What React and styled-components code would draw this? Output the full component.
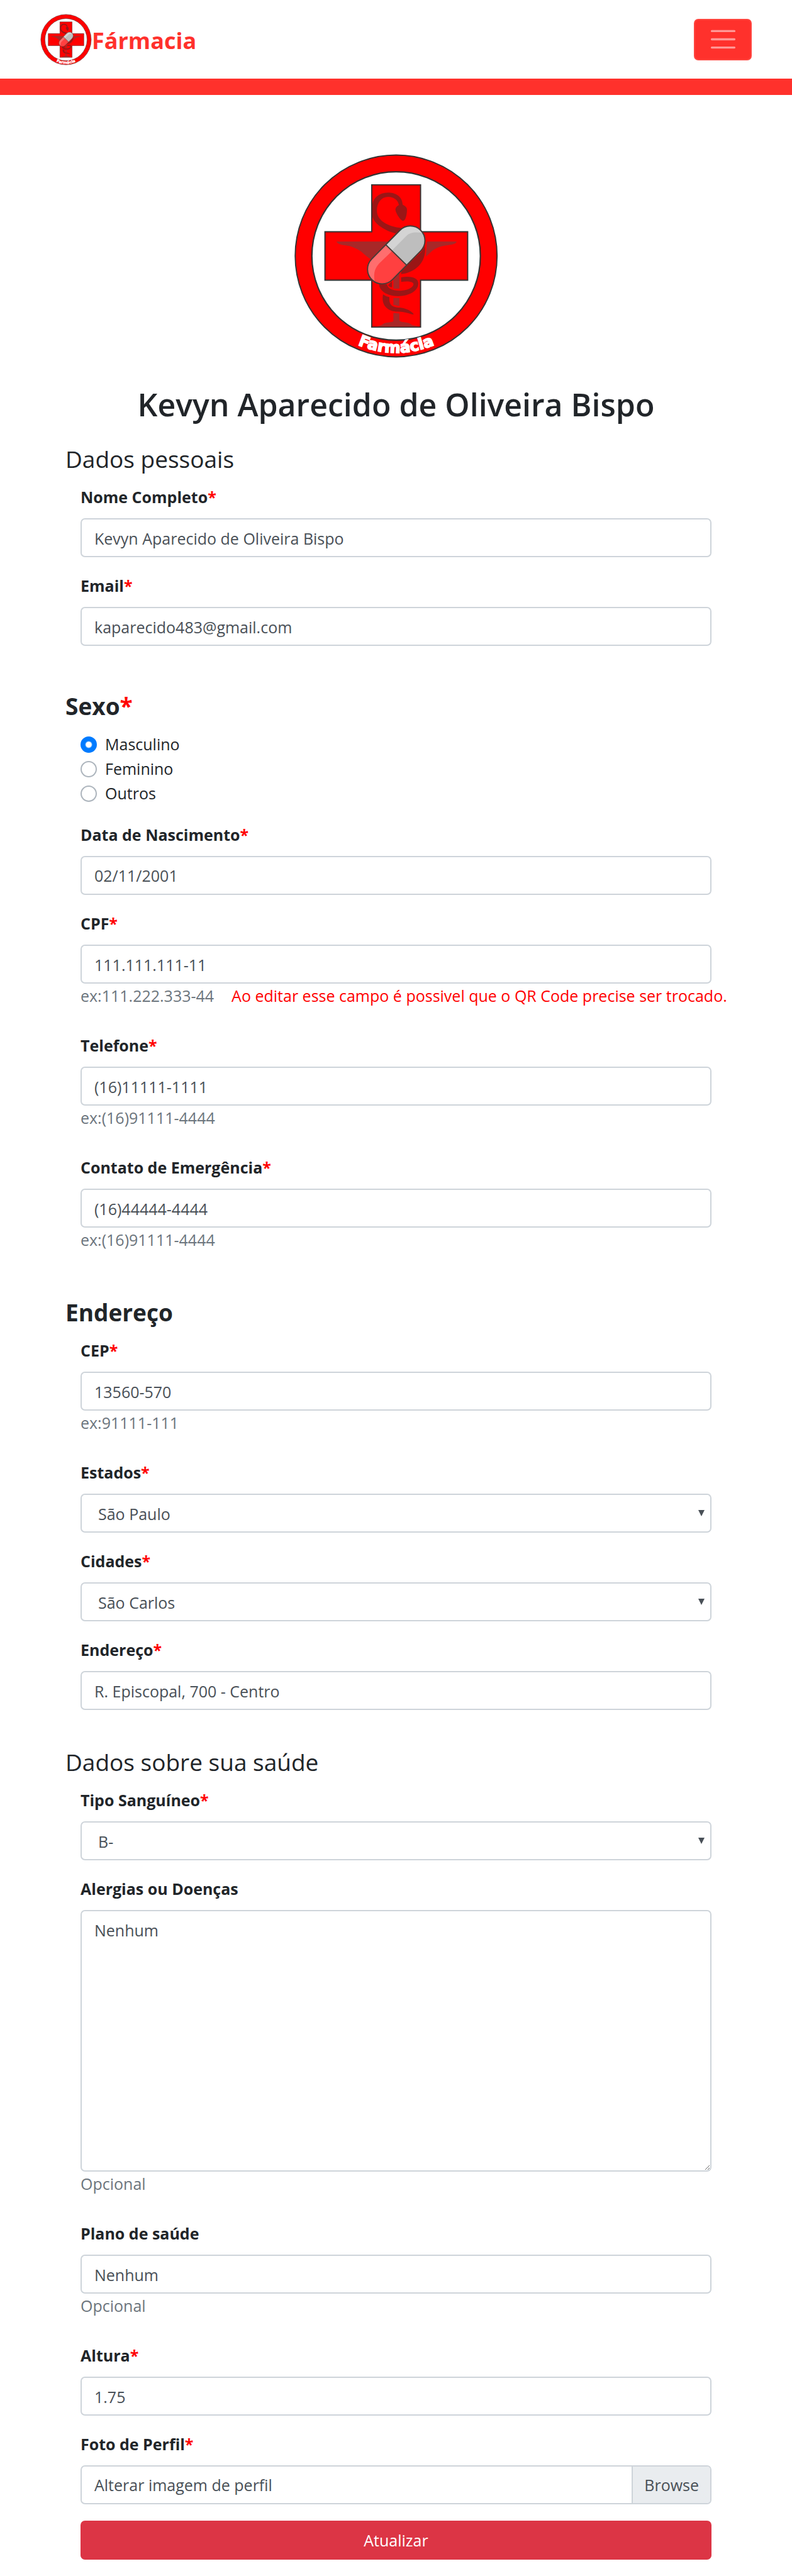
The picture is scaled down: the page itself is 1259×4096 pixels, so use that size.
import React, { useId, useState } from "react";
import styled, { createGlobalStyle } from "styled-components";

const color = {
  brand: "#ff312c",
  text: "#212529",
  field: "#495057",
  border: "#ced4da",
  muted: "#6c757d",
  required: "#ff0000",
};

const GlobalStyle = createGlobalStyle`
  *, *::before, *::after { box-sizing: border-box; }
  body {
    margin: 0;
    background: #fff;
    color: ${color.text};
    font: 400 25px/39px "Open Sans", "Noto Sans", sans-serif;
  }
  input, select, textarea, button { font: inherit; }
`;

/* ---------- header ---------- */

const Navbar = styled.header`
  display: flex;
  align-items: center;
  justify-content: space-between;
  min-height: 125px;
  padding: 0 64px;
`;

const Brand = styled.a`
  display: flex;
  align-items: center;
  color: ${color.brand};
  text-decoration: none;
`;

const BrandName = styled.span`
  padding-top: 4px;
  font-size: 36px;
  font-weight: 700;
  line-height: 49px;
`;

const MenuButton = styled.button`
  display: flex;
  align-items: center;
  justify-content: center;
  width: 92px;
  height: 66px;
  padding: 0;
  border: 2px solid #ff453f;
  border-radius: 7px;
  background: ${color.brand};
  cursor: pointer;
`;

const Band = styled.div`
  height: 26px;
  background: ${color.brand};
`;

/* ---------- logo ---------- */

const LogoSvg = styled.svg`
  display: block;
  flex: none;
  width: ${(p) => p.$size}px;
  height: ${(p) => p.$size}px;
`;

const LogoText = styled.text`
  font-family: "DejaVu Sans", sans-serif;
  font-size: 90px;
  font-weight: 700;
  fill: #fff;
  stroke: #fff;
  stroke-width: 6px;
`;

function Logo({ size }) {
  const arc = useId();
  return (
    <LogoSvg $size={size} viewBox="55 48 1200 1200" role="img" aria-label="Farmácia">
      <circle cx="654" cy="648" r="587" fill="#f00" stroke="#333" strokeWidth="7" />
      <circle cx="654" cy="648" r="490" fill="#fff" stroke="#333" strokeWidth="8" />
      <path
        d="M512 234H796V507H1070V789H796V1062H512V789H240V507H512Z"
        fill="#f00"
        stroke="#333"
        strokeWidth="7"
      />
      <g fill="#a82828">
        <path d="M307 564H660L505 665C470 645 460 620 410 600C370 580 320 592 307 564Z" />
        <path d="M833 564H1005C1003 588 945 580 900 598C860 613 845 640 827 652Z" />
        <path d="M638 740H673V838H638ZM638 892H673V940L638 932ZM638 979L673 983V1025C680 1035 720 1032 735 1042C750 1055 760 1050 790 1059H530C580 1055 570 1040 600 1036C630 1032 638 1032 638 1025Z" />
      </g>
      <g fill="#9a1616">
        <path d="M692 350C690 300 650 279 605 279C555 279 522 310 516 345V420C530 465 590 500 650 517L690 486C600 478 542 440 542 385C542 335 570 304 607 304C640 304 665 322 670 352C660 358 650 365 650 380C652 400 682 444 694 444C708 444 717 410 717 378C717 365 706 358 692 350Z" />
        <path d="M822 590C832 690 760 745 683 753V735L715 705L800 625Z" />
        <path d="M683 772C740 762 783 775 783 808C783 850 730 882 665 882C600 882 555 850 555 812H600C605 840 640 852 680 850C725 848 755 830 755 812C755 797 720 792 683 799Z" />
        <path d="M607 818L630 795V830Q618 832 607 818Z" />
        <path d="M578 871Q594 884 615 888C612 920 620 945 665 948C710 948 745 970 756 986C750 995 720 972 665 972C600 972 565 930 578 871Z" />
      </g>
      <g transform="translate(654.5 642) rotate(-45.5)">
        <rect x="-202" y="-85" width="404" height="170" rx="85" fill="#ff4040" />
        <path d="M0 -85H117A85 85 0 0 1 117 85H0Z" fill="#bebebe" />
      </g>
      <path d="M596 580L675 500C702 470 770 462 803 514C770 508 735 510 715 530L626 620Z" fill="#d4d4d4" />
      <path d="M594 586L512 668C478 700 480 760 529 795C520 740 535 715 555 692L627 622Z" fill="#ff6e6e" />
      <g transform="translate(654.5 642) rotate(-45.5)" fill="none" stroke="#443c38" strokeWidth="7">
        <rect x="-202" y="-85" width="404" height="170" rx="85" />
        <path d="M0 -85V85" />
      </g>
      <path id={arc} d="M88 645A566 566 0 0 0 1220 645" fill="none" />
      <LogoText textAnchor="middle">
        <textPath href={`#${arc}`} startOffset="50%">
          Farmácia
        </textPath>
      </LogoText>
    </LogoSvg>
  );
}

/* ---------- page ---------- */

const Page = styled.main`
  padding: 92px 104px 26px;
`;

const Profile = styled.div`
  display: flex;
  flex-direction: column;
  align-items: center;
  gap: 40px;
`;

const ProfileName = styled.h1`
  margin: 0;
  font-size: 50px;
  font-weight: 600;
  line-height: 64px;
  text-align: center;
`;

const Section = styled.section`
  margin-top: ${(p) => p.$space}px;
`;

const SectionTitle = styled.h2`
  margin: 0 0 16px;
  font-size: 37px;
  font-weight: ${(p) => (p.$strong ? 700 : 400)};
  line-height: 51px;
`;

const Fields = styled.div`
  display: flex;
  flex-direction: column;
  gap: 26px;
  padding: 0 24px;
`;

const Group = styled.div`
  display: flex;
  flex-direction: column;
  padding-bottom: ${(p) => (p.$spaced ? 14 : 0)}px;
`;

const Label = styled.label`
  align-self: flex-start;
  margin-bottom: 14px;
  font-weight: 700;
`;

const Required = styled.span`
  color: ${color.required};
`;

const Control = styled.input`
  width: 100%;
  height: 62px;
  padding: ${(p) => (p.$centered ? 0 : 2)}px 20px 0;
  border: 2px solid ${color.border};
  border-radius: 7px;
  background: #fff;
  color: ${color.field};
`;

const TextArea = styled.textarea`
  display: block;
  width: 100%;
  padding: 11px 20px;
  border: 2px solid ${color.border};
  border-radius: 7px;
  background: #fff;
  color: ${color.field};
  line-height: 39px;
  resize: vertical;
`;

const SelectBox = styled.div`
  display: grid;
  align-items: center;

  > * {
    grid-area: 1 / 1;
  }
`;

const SelectControl = styled.select`
  width: 100%;
  height: 62px;
  padding: 2px 26px 0;
  border: 2px solid ${color.border};
  border-radius: 7px;
  background: #fff;
  color: ${color.field};
  appearance: none;
`;

const Arrow = styled.svg`
  justify-self: end;
  width: 10px;
  height: 10px;
  margin-right: 11px;
  fill: ${color.field};
  pointer-events: none;
`;

const Hints = styled.div`
  display: flex;
  gap: 28px;
  white-space: nowrap;
`;

const Hint = styled.span`
  color: ${(p) => (p.$alert ? color.required : color.muted)};
`;

const RadioGroup = styled.fieldset`
  display: flex;
  flex-direction: column;
  margin: 0;
  padding: 0 0 1px;
  border: 0;
`;

const RadioLabel = styled.label`
  display: flex;
  align-items: center;
  align-self: flex-start;
  gap: 13px;
`;

const Radio = styled.input`
  width: 26px;
  height: 26px;
  margin: 0;
  border: 2px solid #adb5bd;
  border-radius: 50%;
  background: #fff;
  appearance: none;

  &:checked {
    border-color: #007bff;
    background: radial-gradient(circle, #fff 4px, #007bff 6px);
  }
`;

const FileBox = styled.div`
  position: relative;
  display: flex;
  height: 62px;
  border: 2px solid ${color.border};
  border-radius: 7px;
  overflow: hidden;
  color: ${color.field};
  line-height: 58px;
`;

const FileInput = styled.input`
  position: absolute;
  inset: 0;
  width: 100%;
  height: 100%;
  opacity: 0;
`;

const FileText = styled.span`
  flex: 1;
  padding: 0 20px;
`;

const Browse = styled.span`
  padding: 0 18px;
  border-left: 2px solid ${color.border};
  background: #e9ecef;
`;

const Submit = styled.button`
  width: 100%;
  height: 62px;
  padding: 0;
  border: 0;
  border-radius: 7px;
  background: #dc3545;
  color: #fff;
  cursor: pointer;
`;

function Field({ label, required, hint, alert, children }) {
  const id = useId();
  return (
    <Group $spaced={Boolean(hint)}>
      <Label htmlFor={id}>
        {label}
        {required && <Required>*</Required>}
      </Label>
      {children(id)}
      {hint && (
        <Hints>
          <Hint>{hint}</Hint>
          {alert && <Hint $alert>{alert}</Hint>}
        </Hints>
      )}
    </Group>
  );
}

function TextField({ value, type = "text", centered, ...rest }) {
  return (
    <Field {...rest}>
      {(id) => <Control id={id} type={type} defaultValue={value} $centered={centered} />}
    </Field>
  );
}

function SelectField({ options, value, ...rest }) {
  return (
    <Field {...rest}>
      {(id) => (
        <SelectBox>
          <SelectControl id={id} defaultValue={value}>
            {options.map((o) => (
              <option key={o}>{o}</option>
            ))}
          </SelectControl>
          <Arrow viewBox="0 0 10 10" aria-hidden="true">
            <path d="M0 0H10L5 10Z" />
          </Arrow>
        </SelectBox>
      )}
    </Field>
  );
}

export default function App() {
  const [sex, setSex] = useState("Masculino");
  return (
    <>
      <GlobalStyle />
      <Navbar>
        <Brand href="#">
          <Logo size={82} />
          <BrandName>Fármacia</BrandName>
        </Brand>
        <MenuButton type="button" aria-label="Menu">
          <svg width="49" height="49" viewBox="0 0 30 30" aria-hidden="true">
            <path
              d="M4 7h22M4 15h22M4 23h22"
              stroke="#fff"
              strokeOpacity="0.5"
              strokeWidth="2"
              strokeLinecap="round"
            />
          </svg>
        </MenuButton>
      </Navbar>
      <Band />
      <Page>
        <Profile>
          <Logo size={328} />
          <ProfileName>Kevyn Aparecido de Oliveira Bispo</ProfileName>
        </Profile>
        <form onSubmit={(e) => e.preventDefault()}>
          <Section $space={29}>
            <SectionTitle>Dados pessoais</SectionTitle>
            <Fields>
              <TextField label="Nome Completo" required value="Kevyn Aparecido de Oliveira Bispo" />
              <TextField label="Email" required type="email" value="kaparecido483@gmail.com" />
            </Fields>
          </Section>

          <Section $space={70}>
            <SectionTitle $strong id="sexo">
              Sexo<Required>*</Required>
            </SectionTitle>
            <Fields>
              <RadioGroup aria-labelledby="sexo">
                {["Masculino", "Feminino", "Outros"].map((s) => (
                  <RadioLabel key={s}>
                    <Radio
                      type="radio"
                      name="sexo"
                      value={s}
                      checked={sex === s}
                      onChange={() => setSex(s)}
                    />
                    {s}
                  </RadioLabel>
                ))}
              </RadioGroup>
              <TextField label="Data de Nascimento" required centered value="02/11/2001" />
              <TextField
                label="CPF"
                required
                value="111.111.111-11"
                hint="ex:111.222.333-44"
                alert="Ao editar esse campo é possivel que o QR Code precise ser trocado."
              />
              <TextField label="Telefone" required type="tel" value="(16)11111-1111" hint="ex:(16)91111-4444" />
              <TextField
                label="Contato de Emergência"
                required
                type="tel"
                value="(16)44444-4444"
                hint="ex:(16)91111-4444"
              />
            </Fields>
          </Section>

          <Section $space={56}>
            <SectionTitle $strong>Endereço</SectionTitle>
            <Fields>
              <TextField label="CEP" required value="13560-570" hint="ex:91111-111" />
              <SelectField
                label="Estados"
                required
                value="São Paulo"
                options={["Minas Gerais", "Rio de Janeiro", "São Paulo"]}
              />
              <SelectField
                label="Cidades"
                required
                value="São Carlos"
                options={["Araraquara", "Ribeirão Preto", "São Carlos"]}
              />
              <TextField label="Endereço" required value="R. Episcopal, 700 - Centro" />
            </Fields>
          </Section>

          <Section $space={57}>
            <SectionTitle>Dados sobre sua saúde</SectionTitle>
            <Fields>
              <SelectField
                label="Tipo Sanguíneo"
                required
                value="B-"
                options={["A+", "A-", "B+", "B-", "AB+", "AB-", "O+", "O-"]}
              />
              <Field label="Alergias ou Doenças" hint="Opcional">
                {(id) => <TextArea id={id} rows={10} defaultValue="Nenhum" />}
              </Field>
              <TextField label="Plano de saúde" value="Nenhum" hint="Opcional" />
              <TextField label="Altura" required value="1.75" />
              <Field label="Foto de Perfil" required>
                {(id) => (
                  <FileBox>
                    <FileText>Alterar imagem de perfil</FileText>
                    <Browse>Browse</Browse>
                    <FileInput id={id} type="file" accept="image/*" />
                  </FileBox>
                )}
              </Field>
              <Submit type="submit">Atualizar</Submit>
            </Fields>
          </Section>
        </form>
      </Page>
    </>
  );
}
